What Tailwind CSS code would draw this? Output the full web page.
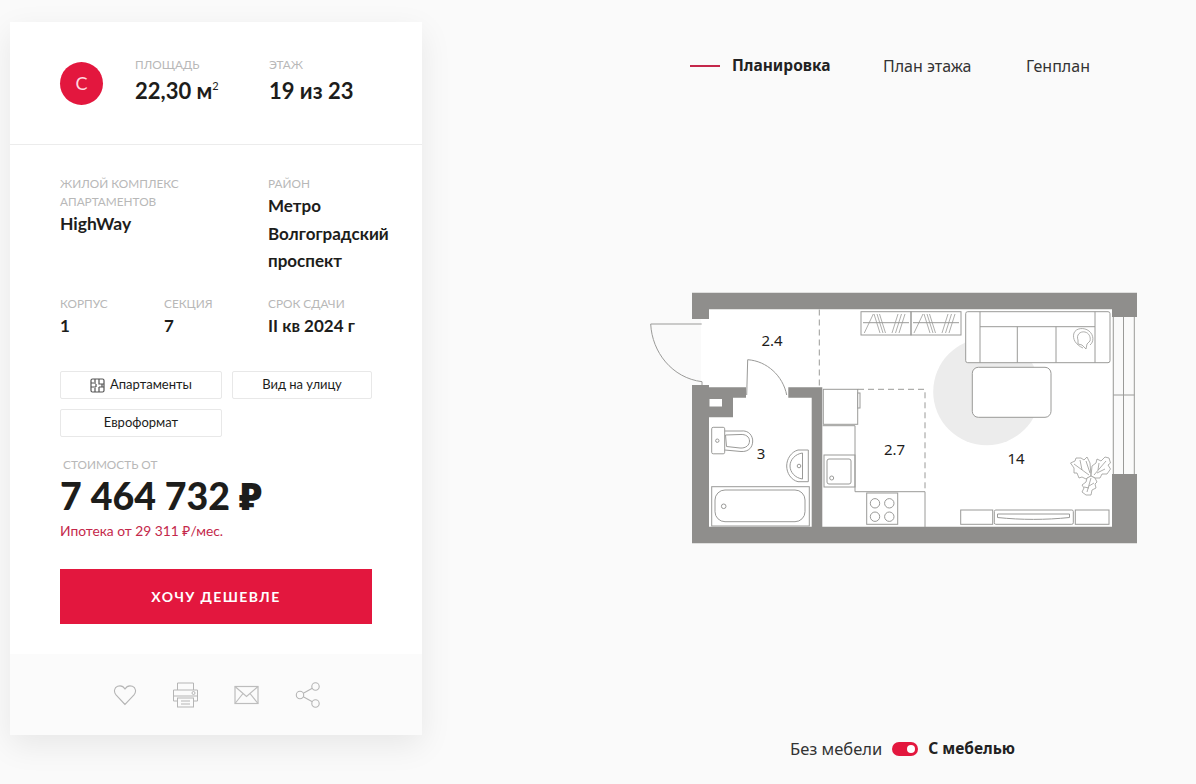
<!DOCTYPE html>
<html lang="ru">
<head>
  <meta charset="UTF-8" />
  <title>Планировка</title>
  <script src="https://cdn.jsdelivr.net/npm/@tailwindcss/browser@4"></script>
</head>
<body class="bg-[#fafafa] overflow-hidden font-['Lato','Noto_Sans',sans-serif] text-[#1d1d1b]">
  <div class="flex h-[784px] w-[1196px]">

    <!-- card -->
    <div class="ml-[10px] mt-[22px] h-[713px] w-[412px] shrink-0 bg-white shadow-[0_10px_30px_rgba(0,0,0,0.08)] flex flex-col">
      <div class="h-[122px] box-content border-b border-[#ececec] flex pl-[50px]">
        <div class="mt-[40px] w-[43px] h-[43px] rounded-full bg-[#e3173e] text-[#ffd9e0] text-[18px] flex items-center justify-center">С</div>
        <div class="ml-[32px] w-[134px] pt-[35px]">
          <div class="text-[11.8px] leading-[16px] text-[#b8b8b8]">ПЛОЩАДЬ</div>
          <div class="mt-[3px] text-[22px] leading-[30px] font-bold">22,30 м<sup class="text-[11px] font-normal -top-[9px]">2</sup></div>
        </div>
        <div class="pt-[35px]">
          <div class="text-[11.8px] leading-[16px] text-[#b8b8b8]">ЭТАЖ</div>
          <div class="mt-[3px] text-[22px] leading-[30px] font-bold">19 из 23</div>
        </div>
      </div>

      <div class="pl-[50px] pt-[30px] flex h-[150px]">
        <div class="w-[208px]">
          <div class="text-[11.8px] leading-[18px] text-[#b8b8b8]">ЖИЛОЙ КОМПЛЕКС<br />АПАРТАМЕНТОВ</div>
          <div class="text-[17.5px] leading-[26px] font-bold">HighWay</div>
        </div>
        <div>
          <div class="text-[11.8px] leading-[18px] text-[#b8b8b8]">РАЙОН</div>
          <div class="text-[17px] leading-[27.5px] font-bold -mt-[1px]">Метро<br />Волгоградский<br />проспект</div>
        </div>
      </div>

      <div class="pl-[50px] flex h-[48px]">
        <div class="w-[104px]">
          <div class="text-[11.8px] leading-[18px] text-[#b8b8b8]">КОРПУС</div>
          <div class="text-[17px] leading-[26px] font-bold">1</div>
        </div>
        <div class="w-[104px]">
          <div class="text-[11.8px] leading-[18px] text-[#b8b8b8]">СЕКЦИЯ</div>
          <div class="text-[17px] leading-[26px] font-bold">7</div>
        </div>
        <div>
          <div class="text-[11.8px] leading-[18px] text-[#b8b8b8]">СРОК СДАЧИ</div>
          <div class="text-[17px] leading-[26px] font-bold">II кв 2024 г</div>
        </div>
      </div>

      <div class="pl-[50px] mt-[28px] flex flex-wrap gap-x-[10px] gap-y-[10px] w-[362px] text-[13px]">
        <div class="w-[162px] h-[28px] border border-[#e8e8e8] rounded-[2px] flex items-center justify-center gap-[5px]">
          <svg class="w-[15px] h-[15px]" viewBox="0 0 15 15" fill="none" stroke="#555" stroke-width="1.200">
            <rect x="1" y="1" width="13" height="13" rx="1.500" />
            <path d="M1 5h3M5 1v5M5 10v4M1 9h5M9 1v5h5M9 9h5M9 9v5M12 6v3M6 6v3" />
          </svg>
          <span>Апартаменты</span>
        </div>
        <div class="w-[140px] h-[28px] border border-[#e8e8e8] rounded-[2px] flex items-center justify-center">Вид на улицу</div>
        <div class="w-[162px] h-[28px] border border-[#e8e8e8] rounded-[2px] flex items-center justify-center">Евроформат</div>
      </div>

      <div class="pl-[53px] mt-[20px] text-[11.8px] leading-[16px] text-[#b8b8b8]">СТОИМОСТЬ ОТ</div>
      <div class="pl-[50px] mt-[1px] text-[37.5px] leading-[44px] font-black">7 464 732 ₽</div>
      <div class="pl-[50px] mt-[3px] text-[13.8px] leading-[20px] text-[#c4274a]">Ипотека от 29 311 ₽/мес.</div>

      <div class="ml-[50px] mt-[28px] w-[312px] h-[55px] bg-[#e3173e] text-white text-[14px] font-bold tracking-[0.1em] flex items-center justify-center">ХОЧУ ДЕШЕВЛЕ</div>

      <div class="mt-auto h-[81px] bg-[#fbfbfb] flex items-center pl-[103px] gap-[30px]">
        <svg class="w-[24px] h-[22px]" viewBox="0 0 24 22" fill="none" stroke="#b5b5b5" stroke-width="1.100">
          <path d="M12 20.500 3 11C.4 8 1.200 3.600 4.600 2.300 7.400 1.300 10.400 2.400 12 5c1.600-2.600 4.600-3.700 7.400-2.700C22.800 3.600 23.600 8 21 11Z" />
        </svg>
        <svg class="w-[25px] h-[26px] ml-[6px]" viewBox="0 0 25 26" fill="none" stroke="#b5b5b5" stroke-width="1">
          <path d="M4.500 8V1h16v7M4.500 19H.5V8h24v11h-4" />
          <rect x="4.500" y="16" width="16" height="9" />
          <path d="M8 19h9M8 22h9M.5 14h24" />
          <circle cx="20.500" cy="11" r="1.500" />
        </svg>
        <svg class="w-[25px] h-[20px] ml-[6px]" viewBox="0 0 25 20" fill="none" stroke="#bdbdbd" stroke-width="1.200">
          <rect x="1" y="1.500" width="23" height="17" />
          <path d="M1 1.500l11.500 10L24 1.500M1 18.500l8-10M24 18.500l-8-10" />
        </svg>
        <svg class="w-[26px] h-[26px] ml-[6px]" viewBox="0 0 26 26" fill="none" stroke="#b5b5b5" stroke-width="1.100">
          <circle cx="5" cy="13" r="3.700" />
          <circle cx="20.500" cy="4.500" r="3.700" />
          <circle cx="20.500" cy="21.500" r="3.700" />
          <path d="M8.300 11.200 17.300 6.300M8.300 14.800l9 4.900" />
        </svg>
      </div>
    </div>

    <!-- plan side -->
    <div class="flex-1 flex flex-col font-['Noto_Sans',sans-serif]">
      <div class="mt-[54px] h-[24px] pl-[268px] flex items-center text-[16px] text-[#333]">
        <span class="w-[30px] h-[2px] bg-[#c4274a]"></span>
        <span class="ml-[12px] w-[151px] text-[15.5px] font-bold text-[#222]">Планировка</span>
        <span class="w-[143px]">План этажа</span>
        <span>Генплан</span>
      </div>

      <svg class="block ml-[218px] mt-[207px] w-[510px] h-[265px]" viewBox="640 285 510 265" fill="none" stroke="#9a9a98" stroke-width="1">
        <!-- room -->
        <rect x="701" y="309" width="411" height="218" fill="#fff" stroke="none" />
        <circle cx="986.700" cy="391.700" r="53.500" fill="#ececec" stroke="none" />

        <!-- walls -->
        <path fill="#8f8e8c" stroke="none" d="M692 292.700H1137V317H1112V309.300H709V319H692ZM692 385H709V387.300H746V397.700H733V417.300H709V526.700H811.700V397.700H788.300V387.300H822.300V526.700H1112V474H1137V543.300H692Z" />
        <rect x="709.500" y="399" width="12.500" height="7.500" fill="#fff" stroke="none" />

        <!-- doors -->
        <path d="M701.700 324H650.700C652 352 672 378 702 381.700V385" />
        <path d="M746.700 395 747.700 359.700C767 361 783 376 786.700 395" />

        <!-- dashed zone lines -->
        <path stroke-dasharray="6 4" d="M819.300 309.500V389M858 389.300H925V491" />
        <path d="M925 491.700V527M855 491.700H925M855 425.700V491.700" />

        <!-- kitchen -->
        <rect x="823.300" y="389.300" width="34.400" height="35" fill="#fff" />
        <rect x="857.700" y="393" width="2.300" height="15" fill="#fff" />
        <path d="M822.700 425.700H855" />
        <rect x="824" y="455" width="31" height="32" />
        <rect x="827" y="459" width="24" height="25" rx="2" />
        <circle cx="831.700" cy="478" r="2" />
        <rect x="866.700" y="493" width="31" height="31.300" />
        <circle cx="875" cy="503.300" r="4.700" />
        <circle cx="889.300" cy="503.300" r="4.700" />
        <circle cx="875" cy="516.700" r="4.700" />
        <circle cx="889.300" cy="516.700" r="4.700" />

        <!-- wardrobe -->
        <rect x="861" y="311.700" width="50" height="23.300" />
        <rect x="911" y="311.700" width="50" height="23.300" />
        <path d="M863 322.700H909M913 322.700H959" />
        <path stroke-width="0.800" d="M873.300 314 864.300 333M874 314 880 333M877 314 883 333M879.500 314 885.500 333M898 314 892 333M901.500 314 895.500 333M905 314 899 333M923 314 914 333M924 314 930 333M927 314 933 333M929.500 314 935.500 333M948 314 942 333M951.500 314 945.500 333M955 314 949 333" />

        <!-- sofa -->
        <rect x="965.700" y="311.700" width="144.300" height="51" rx="2" fill="#fff" />
        <path d="M980 311.700V362.700M1095 311.700V362.700M980 326.700H1095M1017.300 326.700V362.700M1056 326.700V362.700" />
        <!-- cat -->
        <g stroke-width="0.800">
          <path d="M1083 348C1076 345 1072 339 1074 333 1076 328 1084 327 1089 331 1094 335 1094 342 1090 345" />
          <path d="M1078 340C1076 335 1080 331 1085 332 1089 333 1091 337 1090 341L1087 344 1086 349 1082 345 1078 344Z" />
        </g>
        <rect x="972.300" y="367.300" width="78.700" height="50" rx="6" fill="#fff" />

        <!-- window -->
        <path d="M1113.300 317V474M1123.500 317V474M1134.300 317V474M1113.300 395H1134.300" />

        <!-- tv unit -->
        <rect x="960.700" y="510" width="32" height="14.300" />
        <rect x="994.300" y="510" width="79" height="14.300" rx="1.500" />
        <rect x="1075.300" y="510" width="33.700" height="14.300" />
        <path d="M997.500 514H1069.500V517.500C1046 520 1021 520 997.500 517.500Z" />

        <!-- plant -->
        <g stroke-width="0.800" fill="#fff">
          <path d="M1070.500 463 1075 461 1076 458 1081 458 1084 460 1087 457 1090 463 1091 476 1086 479 1082 477 1079 478 1077 473 1074 473 1074 468Z" />
          <path d="M1091 476 1092 466 1096 463 1097 459 1101 461 1105 457 1109 458 1110.500 463 1108 465 1110.500 469 1107 474 1102 474 1100 478 1095 478Z" />
          <path d="M1091 476 1095 478 1097 482 1095 484 1096 488 1092 490 1091 495 1086 495 1082 492 1084 488 1082 485 1086 482 1087 478Z" />
          <path d="M1074 464 1089 475M1080 460 1082 470M1086 461 1090 473M1106 461 1094 475M1099 463 1098 470M1105 469 1097 473M1091 478 1087 492M1094 483 1089 486M1084 487 1089 488" />
        </g>

        <!-- bathroom -->
        <rect x="711.700" y="486.700" width="97.600" height="39.300" />
        <rect x="715" y="490" width="90" height="31.700" rx="10" />
        <circle cx="723.700" cy="506.300" r="2.300" />
        <rect x="711.700" y="427.300" width="13" height="26.500" rx="1.500" fill="#fff" />
        <circle cx="717.300" cy="440.700" r="1.700" />
        <path d="M724.700 431H741C749 430 752.700 436 752.700 441 752.700 447 749 452 741 451.500L724.700 450" />
        <path d="M725.500 435 740 434.500C746 434 749.500 437 749.500 441 749.500 445 746 448.500 740 448L726.500 446.500Z" />
        <path d="M808.300 450H798C791 452 786.700 459 786.700 466 786.700 473 791 480 798 481.700H808.300Z" />
        <path d="M802.500 453C795 454 790 460 790 466 790 472 795 478 802.500 479Z" />
        <circle cx="799" cy="466" r="1.800" />

        <!-- labels -->
        <g fill="#1d1d1b" stroke="none" font-size="15" text-anchor="middle" font-family="'Noto Sans',sans-serif">
          <text x="772" y="346">2.4</text>
          <text x="761" y="459">3</text>
          <text x="894.500" y="455">2.7</text>
          <text x="1016" y="464">14</text>
        </g>
      </svg>

      <div class="mt-[189px] h-[20px] pl-[368px] flex items-center text-[16.5px] text-[#333]">
        <span>Без мебели</span>
        <span class="ml-[10px] w-[26px] h-[14px] rounded-full bg-[#e3173e] flex items-center justify-end pr-[3px]">
          <span class="w-[8px] h-[8px] rounded-full bg-white"></span>
        </span>
        <span class="ml-[10px] text-[15.5px] font-bold text-[#222]">С мебелью</span>
      </div>
    </div>
  </div>
</body>
</html>
